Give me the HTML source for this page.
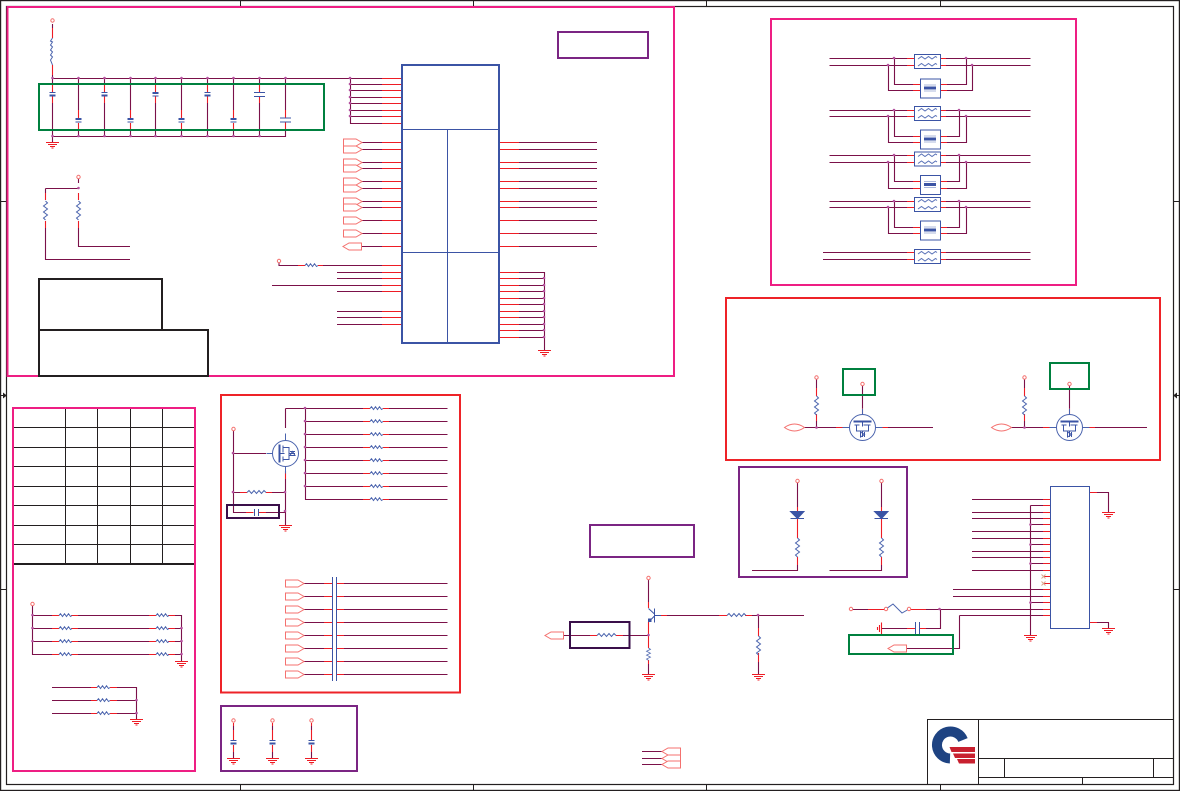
<!DOCTYPE html>
<html lang="en">
<head>
<meta charset="utf-8">
<title>Schematic</title>
<style>
html,body{margin:0;padding:0;background:#fff;width:1180px;height:791px;overflow:hidden}
svg{display:block}
</style>
</head>
<body>
<svg width="1180" height="791" viewBox="0 0 1180 791" xmlns="http://www.w3.org/2000/svg" fill="none">
<defs>
<path id="gnd" d="M-6.5 .5H6.5M-4.5 2.5H4.5M-2.5 4.5H2.5M-1 6H1" stroke="#ee1c25"/>
<path id="rh" d="M0 0l1.5-1.8 2 2.8 2-2.8 2 2.8 2-2.8 2 2.8 1.5-1" stroke="#4a63ad"/>
<path id="rh2" d="M0 0l2-2 2.5 3 2.5-3 2.5 3 2.5-3 2.5 3 2.5-3 2 2" stroke="#4a63ad"/>
<path id="rv" d="M0 0l2 2-4 3 4 3-4 3 4 3-4 3 2 2" stroke="#4a63ad"/>
<path id="pr" d="M.5-3.5H13L19 0 13 3.5H.5Z" stroke="#f4716f" fill="#fff"/>
<path id="pl" d="M18.5-3.5H6L0 0 6 3.5H18.5Z" stroke="#f4716f" fill="#fff"/>
<path id="lens" d="M0 0Q10-7 20 0Q10 7 0 0Z" stroke="#f4716f" fill="#fff"/>
<circle id="c" r="1.7" stroke="#f4716f" fill="#fff"/>
<g id="cu" stroke="#3b54a5"><path d="M-3 0H3" stroke-width="1"/><path d="M-3 3H3" stroke-width="2"/></g>
<g id="cd" stroke="#3b54a5"><path d="M-3 0H3" stroke-width="2"/><path d="M-3 3H3" stroke-width="1"/></g>
<g id="cw" stroke="#3b54a5"><path d="M-5.5 0H5.5M-5.5 4H5.5" stroke-width="1"/></g>
<g id="cb"><path d="M0-6.5V6.5M4-6.5V6.5" stroke="#3b54a5"/></g>
<g id="fb"><rect x=".5" y=".5" width="26" height="14" stroke="#3b54a5"/><path d="M4 5l3.5-2.5 3.5 2.5 3.5-2.5 3.500 2.500 3.500-2.500 1.500 1M4 12l3.500-2.500 3.500 2.500 3.500-2.500 3.500 2.500 3.500-2.500 1.500 1" stroke="#5a72b8"/></g>
<g id="cm"><rect x=".5" y=".5" width="20" height="19" stroke="#3b54a5"/><path d="M4 9.500H16" stroke="#3b54a5" stroke-width="3"/><path d="M5 7V6M7 7V6M9 7V6M11 7V6M13 7V6M15 7V6M5 13V12M7 13V12M9 13V12M11 13V12M13 13V12M15 13V12" stroke="#5a72b8"/></g>
<g id="q" stroke="#4a63ad"><circle r="13"/><path d="M-20 0H-13M13 0H20M0-19V-13"/><path d="M-9-6H9" stroke-width="2" stroke="#3b54a5"/><path d="M-8-2.500H-3M1-2.500H8M-6-2.500V3.500H6V-2.500M0 3.500V9.500M0-5V-1" stroke="#3b54a5"/><path d="M-2 4.500L2 7-2 9.500ZM2 4.500V9.500" stroke="#3b54a5"/></g>
</defs>

<!-- frame -->
<g stroke="#231f20">
<rect x=".5" y=".5" width="1179" height="790" stroke-width="1.4"/>
<rect x="6.5" y="6.500" width="1167" height="778" stroke-width="1.2"/>
<path d="M240.500 0V6M473.500 0V6M706.500 0V6M940.500 0V6M240.500 785V791M473.500 785V791M706.500 785V791M940.500 785V791M0 201.500H6M0 589.500H6M1174 201.500H1180M1174 589.500H1180M0 395.500H6M1174 395.500H1180"/>
<path d="M3.500 393.500l2.500 2-2.500 2ZM1176.500 393.500l-2.500 2 2.500 2Z" fill="#231f20"/>
</g>

<!-- dark wires -->
<path stroke="#7b1149" stroke-width="1.100" d="
M52.500 24V28M52.500 75V78.500M52.500 78.500H382M52.500 136.500H285.500V130M52.500 136.500V142
M52.500 78.500V83M104.500 78.500V83M155.500 78.500V83M207.500 78.500V83M259.500 78.500V83
M52.500 103V136M104.500 103V136M155.500 103V136M207.500 103V136M259.500 103V136
M78.500 78.500V110M130.500 78.500V110M181.500 78.500V110M233.500 78.500V110M285.500 78.500V110
M78.500 130V136M130.500 130V136M181.500 130V136M233.500 130V136
M78.500 179V183M45.500 228V259.500H130M45.500 188.500H78.500M45.500 188.500V193M78.500 228V246.500H130
M350.500 78.500V123.500H382M350.500 84.500H382M350.500 90.500H382M350.500 97.500H382M350.500 103.500H382M350.500 110.500H382M350.500 116.500H382
M362 142.500H382M362 149.500H382M362 162.500H382M362 168.500H382M362 181.500H382M362 188.500H382M362 201.500H382M362 207.500H382M362 220.500H382M362 233.500H382M362 246.500H382
M519 142.500H597M519 149.500H597M519 162.500H597M519 168.500H597M519 181.500H597M519 188.500H597M519 201.500H597M519 207.500H597M519 220.500H597M519 233.500H597M519 246.500H597
M279 262V265.500H298M323 265.500H382M337 272.500H382M337 278.500H382M272 285.500H382M337 291.500H382M337 311.500H382M337 317.500H382M337 324.500H382
M519 272.500H544.500V350.500M519 278.500H544M519 285.500H544M519 291.500H544M519 298.500H544M519 304.500H544M519 311.500H544M519 317.500H544M519 324.500H544M519 330.500H544M519 337.500H544
M829.500 58.500H907M946 58.500H1030.500M829.500 65.500H907M946 65.500H1030.500
M894.500 58.500V84.500H913M888.500 65.500V90.500H913M966.500 58.500V84.500H947M972.500 65.500V90.500H947
M829.500 110.500H907M946 110.500H1030.500M829.500 116.500H907M946 116.500H1030.500
M894.500 110.500V136.500H913M888.500 116.500V142.500H913M959.500 110.500V136.500H947M966.500 116.500V142.500H947
M829.500 155.500H907M946 155.500H1030.500M829.500 162.500H907M946 162.500H1030.500
M894.500 155.500V181.500H913M888.500 162.500V188.500H913M959.500 155.500V181.500H947M966.500 162.500V188.500H947
M829.500 201.500H907M946 201.500H1030.500M829.500 207.500H907M946 207.500H1030.500
M894.500 201.500V227.500H913M888.500 207.500V233.500H913M959.500 201.500V227.500H947M966.500 207.500V233.500H947
M823 252.500H907M946 252.500H1030.500M823 259.500H907M946 259.500H1030.500
M804 427.500H836M888 427.500H933M816.500 379V388M816.500 421V427.500M862.500 386V408
M1011 427.500H1043M1095 427.500H1147M1024.500 379V388M1024.500 421V427.500M1069.500 386V408
M797.500 483V507M797.500 565V570.500H752M881.500 483V507M881.500 565V570.500H829.500
M972 499.500H1043M972 512.500H1043M972 518.500H1043M972 531.500H1043M972 538.500H1043M972 551.500H1043M972 557.500H1043M972 570.500H1043
M953 589.500H1043M953 596.500H1043M1030.500 505.500H1043M1030.500 524.500H1043M1030.500 544.500H1043M1030.500 563.500H1043M1030.500 602.500H1043M1030.500 505.500V635
M853 609.500H868M926 609.500H1043M940.500 609.500V628.500H926M907 628.500H881.500M959.500 615.500H1043M959.500 615.500V648.500H907
M1097 492.500H1108.500V512M1097 622.500H1108.500V628
M32.500 606V654.500H52M32.500 615.500H52M32.500 628.500H52M32.500 641.500H52M78 615.500H149M78 628.500H149M78 641.500H149M78 654.500H149
M175 615.500H181.500V661M175 628.500H181M175 641.500H181M175 654.500H181
M52 687.500H91M117 687.500H136.500V719M52 700.500H91M117 700.500H136M52 713.500H91M117 713.500H136
M285.500 408.500V428M285.500 408.500H363M305.500 408.500V499.500H363M305.500 421.500H363M305.500 434.500H363M305.500 447.500H363M305.500 460.500H363M305.500 473.500H363M305.500 486.500H363
M389 408.500H447.500M389 421.500H447.500M389 434.500H447.500M389 447.500H447.500M389 460.500H447.500M389 473.500H447.500M389 486.500H447.500M389 499.500H447.500
M285.500 479V525M233.500 431V512.500H246M233.500 453.500H266M233.500 492.500H240M272 492.500H285.500M266 512.500H285.500
M304 583.500H324M304 596.500H324M304 609.500H324M304 622.500H324M304 635.500H324M304 648.500H324M304 661.500H324M304 674.500H324
M344 583.500H447.500M344 596.500H447.500M344 609.500H447.500M344 622.500H447.500M344 635.500H447.500M344 648.500H447.500M344 661.500H447.500M344 674.500H447.500
M233.500 726V730M233.500 752V758M272.500 726V730M272.500 752V758M311.500 726V730M311.500 752V758
M648.500 580V602M667 615.500H719M752 615.500H804M758.500 615.500V628M758.500 662V674M648.500 664V674
M563 635.500H590M623 635.500H648.500
M642 751.500H662M642 758.500H662M642 764.500H662"/>

<!-- red stubs -->
<path stroke="#ee1c25" stroke-width="1.100" d="
M52.500 28V38M52.500 65V75M52.500 83V92M52.500 96V103M104.500 83V92M104.500 96V103M155.500 83V92M155.500 96V103M207.500 83V92M207.500 96V103M259.500 83V92M259.500 97V103
M78.500 110V119M78.500 123V130M130.500 110V119M130.500 123V130M181.500 110V119M181.500 123V130M233.500 110V119M233.500 123V130M285.500 110V118M285.500 122V130
M45.500 193V200M45.500 221V228M78.500 193V200M78.500 221V228
M382 78.500H402M382 84.500H402M382 90.500H402M382 97.500H402M382 103.500H402M382 110.500H402M382 116.500H402M382 123.500H402
M382 142.500H402M382 149.500H402M382 162.500H402M382 168.500H402M382 181.500H402M382 188.500H402M382 201.500H402M382 207.500H402M382 220.500H402M382 233.500H402M382 246.500H402
M499 142.500H519M499 149.500H519M499 162.500H519M499 168.500H519M499 181.500H519M499 188.500H519M499 201.500H519M499 207.500H519M499 220.500H519M499 233.500H519M499 246.500H519
M298 265.500H305M318 265.500H323M382 265.500H402M382 272.500H402M382 278.500H402M382 285.500H402M382 291.500H402M382 311.500H402M382 317.500H402M382 324.500H402
M499 272.500H519M499 278.500H519M499 285.500H519M499 291.500H519M499 298.500H519M499 304.500H519M499 311.500H519M499 317.500H519M499 324.500H519M499 330.500H519M499 337.500H519
M907 58.500H914M907 65.500H914M940 58.500H946M940 65.500H946M913 84.500H920M913 90.500H920M940 84.500H947M940 90.500H947
M907 110.500H914M907 116.500H914M940 110.500H946M940 116.500H946M913 136.500H920M913 142.500H920M940 136.500H947M940 142.500H947
M907 155.500H914M907 162.500H914M940 155.500H946M940 162.500H946M913 181.500H920M913 188.500H920M940 181.500H947M940 188.500H947
M907 201.500H914M907 207.500H914M940 201.500H946M940 207.500H946M913 227.500H920M913 233.500H920M940 227.500H947M940 233.500H947
M907 252.500H914M907 259.500H914M940 252.500H946M940 259.500H946
M836 427.500H843M881 427.500H888M816.500 388V396M816.500 414V421M862.500 408V414
M1043 427.500H1050M1088 427.500H1095M1024.500 388V396M1024.500 414V421M1069.500 408V414
M797.500 507V512M797.500 519V538M797.500 557V565M881.500 507V512M881.500 519V538M881.500 557V565
M1043 499.500H1050M1043 505.500H1050M1043 512.500H1050M1043 518.500H1050M1043 524.500H1050M1043 531.500H1050M1043 538.500H1050M1043 544.500H1050M1043 551.500H1050M1043 557.500H1050M1043 563.500H1050M1043 570.500H1050M1043 576.500H1050M1043 583.500H1050M1043 589.500H1050M1043 596.500H1050M1043 602.500H1050M1043 609.500H1050M1043 615.500H1050
M868 609.500H884M911 609.500H926M907 628.500H915M920 628.500H926M1089 492.500H1097M1089 622.500H1097
M881.500 622.500V634.500M879.500 625V632M877.500 627V630
M52 615.500H59M71 615.500H78M52 628.500H59M71 628.500H78M52 641.500H59M71 641.500H78M52 654.500H59M71 654.500H78
M149 615.500H156M168 615.500H175M149 628.500H156M168 628.500H175M149 641.500H156M168 641.500H175M149 654.500H156M168 654.500H175
M91 687.500H97M110 687.500H117M91 700.500H97M110 700.500H117M91 713.500H97M110 713.500H117
M363 408.500H370M383 408.500H389M363 421.500H370M383 421.500H389M363 434.500H370M383 434.500H389M363 447.500H370M383 447.500H389M363 460.500H370M383 460.500H389M363 473.500H370M383 473.500H389M363 486.500H370M383 486.500H389M363 499.500H370M383 499.500H389
M285.500 471V479M240 492.500H247M266 492.500H272M246 512.500H253.500M259 512.500H266
M324 583.500H332M324 596.500H332M324 609.500H332M324 622.500H332M324 635.500H332M324 648.500H332M324 661.500H332M324 674.500H332
M336 583.500H344M336 596.500H344M336 609.500H344M336 622.500H344M336 635.500H344M336 648.500H344M336 661.500H344M336 674.500H344
M233.500 723V726M233.500 730V740M233.500 745V752M272.500 723V726M272.500 730V740M272.500 745V752M311.500 723V726M311.500 730V740M311.500 745V752
M648.500 602V608M648.500 622V648M648.500 660V664M661 615.500H667M719 615.500H727M745 615.500H752M758.500 628V636M758.500 653V662
M590 635.500H597M616 635.500H623"/>

<!-- junctions -->
<path stroke="#b5519f" stroke-width="2.600" stroke-linecap="round" d="
M52.500 78h0M78.500 78h0M104.500 78h0M130.500 78h0M155.500 78h0M181.500 78h0M207.500 78h0M233.500 78h0M259.500 78h0M285.500 78h0
M52.500 136h0M78.500 136h0M104.500 136h0M130.500 136h0M155.500 136h0M181.500 136h0M207.500 136h0M233.500 136h0M259.500 136h0
M78.500 188h0M350 78h0M350 84h0M350 90h0M350 97h0M350 103h0M350 110h0M350 116h0
M544 278h0M544 285h0M544 291h0M544 298h0M544 304h0M544 311h0M544 317h0M544 324h0M544 330h0M544 337h0
M894 58h0M888 65h0M966 58h0M972 65h0M894 110h0M888 116h0M959 110h0M966 116h0M894 155h0M888 162h0M959 155h0M966 162h0M894 201h0M888 207h0M959 201h0M966 207h0
M816.500 427.500h0M1024.500 427.500h0M1030.500 524.500h0M1030.500 544.500h0M1030.500 563.500h0M1030.500 602.500h0M939.500 609h0
M32.500 615h0M32.500 628h0M32.500 641h0M181.500 628h0M181.500 641h0M181.500 654h0M136.500 700h0M136.500 713h0
M305 408h0M305 421h0M305 434h0M305 447h0M305 460h0M305 473h0M305 486h0M233 453h0M233 492h0M285 492h0M285 511h0
M648.500 635h0M758 615h0"/>

<!-- chip -->
<g stroke="#3b54a5">
<rect x="402" y="65" width="97" height="278" stroke-width="2"/>
<path d="M402 129.500H499M402 252.500H499M447.500 129V343"/>
<rect x="1050.500" y="486.500" width="39" height="142"/>
</g>

<!-- caps and resistors -->
<use href="#cu" x="52.500" y="92.500"/><use href="#cu" x="104.500" y="92.500"/><use href="#cd" x="155.500" y="93"/><use href="#cu" x="207.500" y="92.500"/><use href="#cw" x="259.500" y="92.500"/>
<use href="#cd" x="78.500" y="119"/><use href="#cd" x="130.500" y="119"/><use href="#cd" x="181.500" y="119"/><use href="#cd" x="233.500" y="119"/><use href="#cw" x="285.500" y="118"/>
<path d="M52.500 38l-2 3 2 1-2 3 2 2-2 3 2 2-2 3 2 2-2 3 2 5" stroke="#4a63ad"/>
<use href="#rv" x="45.500" y="201"/><use href="#rv" x="78.500" y="201"/>
<use href="#rh" x="305" y="265.500"/>
<use href="#rh" x="59" y="615.500"/><use href="#rh" x="59" y="628.500"/><use href="#rh" x="59" y="641.500"/><use href="#rh" x="59" y="654.500"/>
<use href="#rh" x="156" y="615.500"/><use href="#rh" x="156" y="628.500"/><use href="#rh" x="156" y="641.500"/><use href="#rh" x="156" y="654.500"/>
<use href="#rh" x="97" y="687.500"/><use href="#rh" x="97" y="700.500"/><use href="#rh" x="97" y="713.500"/>
<use href="#rh" x="370" y="408.500"/><use href="#rh" x="370" y="421.500"/><use href="#rh" x="370" y="434.500"/><use href="#rh" x="370" y="447.500"/><use href="#rh" x="370" y="460.500"/><use href="#rh" x="370" y="473.500"/><use href="#rh" x="370" y="486.500"/><use href="#rh" x="370" y="499.500"/>
<use href="#rh2" x="247" y="492.500"/><use href="#rh2" x="597" y="635.500"/><use href="#rh2" x="727" y="615.500"/>
<use href="#rv" x="816.500" y="396"/><use href="#rv" x="1024.500" y="396"/><use href="#rv" x="797.500" y="538"/><use href="#rv" x="881.500" y="538"/><use href="#rv" x="758.500" y="636"/><use href="#rv" transform="translate(648.500 648) scale(1 .65)"/>
<path d="M254.500 509V516M258.500 509V516" stroke="#3b54a5"/>
<use href="#cb" x="332.500" y="583.500"/><use href="#cb" x="332.500" y="596.500"/><use href="#cb" x="332.500" y="609.500"/><use href="#cb" x="332.500" y="622.500"/><use href="#cb" x="332.500" y="635.500"/><use href="#cb" x="332.500" y="648.500"/><use href="#cb" x="332.500" y="661.500"/><use href="#cb" x="332.500" y="674.500"/>
<use href="#cb" x="915.500" y="628.500"/>
<use href="#cu" x="233.500" y="740.500"/><use href="#cu" x="272.500" y="740.500"/><use href="#cu" x="311.500" y="740.500"/>

<!-- filters -->
<use href="#fb" x="914" y="54"/><use href="#fb" x="914" y="106"/><use href="#fb" x="914" y="151.500"/><use href="#fb" x="914" y="197"/><use href="#fb" x="914" y="249"/>
<use href="#cm" x="920" y="78.500"/><use href="#cm" x="920" y="129.500"/><use href="#cm" x="920" y="175"/><use href="#cm" x="920" y="220.500"/>

<!-- active devices -->
<use href="#q" x="862.500" y="427.500"/><use href="#q" x="1069.500" y="427.500"/>
<use href="#q" transform="translate(285.500 453.500) rotate(-90)"/>
<path d="M790.500 511.500H804L797.500 518.500Z" fill="#3b54a5" stroke="#3b54a5"/><path d="M790.500 518.500H804" stroke="#3b54a5"/>
<path d="M874.500 511.500H888L881.500 518.500Z" fill="#3b54a5" stroke="#3b54a5"/><path d="M874.500 518.500H888" stroke="#3b54a5"/>
<path d="M654.500 608.500V622.500M654.500 615.500H661M648.500 608.500L654.500 614M654.500 616L648.500 622" stroke="#3b54a5"/>
<path d="M648 618.500h3.500v3.500h-3.500Z" fill="#3b54a5"/>
<path d="M886 609L893 604 902 613 909 609" stroke="#4a63ad"/>
<path d="M1041.500 574.500l4 4M1045.500 574.500l-4 4M1041.500 581.500l4 4M1045.500 581.500l-4 4" stroke="#d9a88f"/>

<!-- off-page connectors -->
<use href="#pr" x="343" y="142.500"/><use href="#pr" x="343" y="149.500"/><use href="#pr" x="343" y="162.500"/><use href="#pr" x="343" y="168.500"/><use href="#pr" x="343" y="181.500"/><use href="#pr" x="343" y="188.500"/><use href="#pr" x="343" y="201.500"/><use href="#pr" x="343" y="207.500"/><use href="#pr" x="343" y="220.500"/><use href="#pr" x="343" y="233.500"/><use href="#pl" x="343" y="246.500"/>
<use href="#pr" x="285" y="583.500"/><use href="#pr" x="285" y="596.500"/><use href="#pr" x="285" y="609.500"/><use href="#pr" x="285" y="622.500"/><use href="#pr" x="285" y="635.500"/><use href="#pr" x="285" y="648.500"/><use href="#pr" x="285" y="661.500"/><use href="#pr" x="285" y="674.500"/>
<use href="#pl" x="545" y="635.500"/><use href="#pl" x="662" y="751.500"/><use href="#pl" x="662" y="758.500"/><use href="#pl" x="662" y="764.500"/><use href="#pl" x="888" y="648.500"/>
<use href="#lens" x="784.500" y="427.500"/><use href="#lens" x="991.500" y="427.500"/>

<!-- power dots -->
<use href="#c" x="52.500" y="20.500"/><use href="#c" x="78.500" y="177"/><use href="#c" x="279" y="261"/><use href="#c" x="816.500" y="377.500"/><use href="#c" x="862.500" y="384"/><use href="#c" x="1024.500" y="377.500"/><use href="#c" x="1069.500" y="384"/><use href="#c" x="797.500" y="481"/><use href="#c" x="881.500" y="481"/><use href="#c" x="851" y="609"/><use href="#c" x="886" y="609"/><use href="#c" x="909" y="609"/><use href="#c" x="32.500" y="604"/><use href="#c" x="233.500" y="429"/><use href="#c" x="233.500" y="720.500"/><use href="#c" x="272.500" y="720.500"/><use href="#c" x="311.500" y="720.500"/><use href="#c" x="648.500" y="578"/>

<!-- grounds -->
<use href="#gnd" x="52.500" y="142"/><use href="#gnd" x="544.500" y="350"/><use href="#gnd" x="1108.500" y="512"/><use href="#gnd" x="1108.500" y="628"/><use href="#gnd" x="1030.500" y="635"/><use href="#gnd" x="181.500" y="661"/><use href="#gnd" x="136.500" y="719"/><use href="#gnd" x="285.500" y="525"/><use href="#gnd" x="233.500" y="758"/><use href="#gnd" x="272.500" y="758"/><use href="#gnd" x="311.500" y="758"/><use href="#gnd" x="648.500" y="674"/><use href="#gnd" x="758.500" y="674"/>

<!-- table -->
<path stroke="#231f20" d="M65.500 408V564M97.500 408V564M130.500 408V564M162.500 408V564M13 427.500H195M13 447.500H195M13 466.500H195M13 486.500H195M13 505.500H195M13 525.500H195M13 544.500H195"/>
<path stroke="#231f20" stroke-width="2" d="M13 564H195"/>

<!-- note boxes -->
<g stroke-width="2">
<rect x="7.500" y="7" width="666.500" height="369" stroke="#ee1e83"/>
<rect x="771" y="19" width="305" height="266" stroke="#ee1e83"/>
<rect x="13" y="408" width="182" height="363" stroke="#ee1e83"/>
<rect x="39" y="84" width="285" height="46" stroke="#00803f"/>
<rect x="843" y="369" width="32" height="26" stroke="#00803f"/>
<rect x="1050" y="363" width="39" height="26" stroke="#00803f"/>
<rect x="849" y="635" width="104" height="19" stroke="#00803f"/>
<rect x="558" y="32" width="90" height="26" stroke="#7b2583"/>
<rect x="739" y="467" width="168" height="110" stroke="#7b2583"/>
<rect x="590" y="525" width="104" height="32" stroke="#7b2583"/>
<rect x="221" y="706" width="136" height="65" stroke="#7b2583"/>
<rect x="726" y="298" width="434" height="162" stroke="#ee2328"/>
<rect x="221" y="395" width="239" height="297.500" stroke="#ee2328"/>
<rect x="227" y="505" width="52" height="13" stroke="#3a0f4a"/>
<rect x="570" y="622" width="59.500" height="26" stroke="#3a0f4a"/>
<rect x="39" y="279" width="123" height="51" stroke="#231f20"/>
<rect x="39" y="330" width="169" height="46" stroke="#231f20"/>
</g>

<!-- title block -->
<path stroke="#231f20" d="M927.500 784V719.500H1173M978.500 719.500V784M978.500 758.500H1173M978.500 777.500H1173M1004.500 758.500V777.500M1153.500 758.500V777.500M1082.500 777.500V784"/>
<path d="M963 740A13.500 13.500 0 1 0 950 758.500" stroke="#1e4382" stroke-width="10"/>
<path d="M949.500 747H975V752H951.500ZM953 753.500H975V758H955ZM957 759H975V763.500H959Z" fill="#c8202f"/>
</svg>
</body>
</html>
